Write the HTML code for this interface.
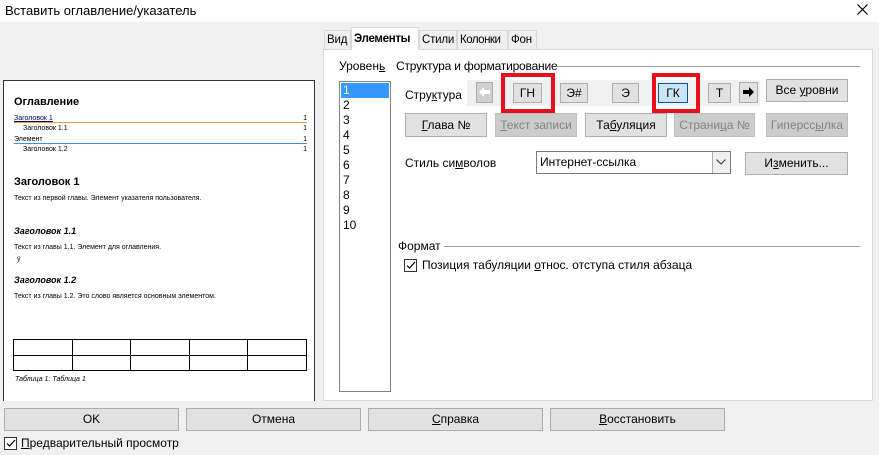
<!DOCTYPE html>
<html><head><meta charset="utf-8"><style>
body{margin:0;width:879px;height:455px;background:#f0f0f0;font-family:"Liberation Sans","DejaVu Sans",sans-serif;font-size:12px;color:#000;position:relative;overflow:hidden}
.a{position:absolute}
.btn{position:absolute;background:#e1e1e1;border:1px solid #adadad;box-sizing:border-box;text-align:center;font-size:12px}
.dis{background:#cccccc;border-color:#bfbfbf;color:#838383}
.pv{font-size:7px;position:absolute}
.tab{position:absolute;top:30px;height:19px;border:1px solid #d9d9d9;border-bottom:none;box-sizing:border-box;padding:3px 0 0 2px;font-size:11.5px;letter-spacing:-0.2px;white-space:nowrap}
</style></head><body>
<div class="a" style="left:0;top:0;width:879px;height:22px;background:#fff"></div>
<div class="a" style="left:5px;top:3px;font-size:13px">Вставить оглавление/указатель</div>
<svg class="a" style="left:857px;top:4px" width="11" height="11"><path d="M0.5 0.5L10.5 10.5M10.5 0.5L0.5 10.5" stroke="#000" stroke-width="1.2"/></svg>

<!-- preview -->
<div class="a" style="left:3px;top:80px;width:312px;height:321px;background:#fff;border:1px solid #333;box-sizing:border-box;border-bottom:none"></div>
<div class="a" style="left:14px;top:96px;font-size:11px;font-weight:bold">Оглавление</div>
<div class="pv" style="left:14px;top:115px;width:293px;border-bottom:1px solid #e0a040;color:#00006a;text-decoration:underline">Заголовок 1<span style="float:right;text-decoration:none;color:#000">1</span></div>
<div class="pv" style="left:23px;top:125px;width:284px">Заголовок 1.1<span style="float:right">1</span></div>
<div class="pv" style="left:14px;top:136px;width:293px;border-bottom:1px solid #4090e0">Элемент<span style="float:right">1</span></div>
<div class="pv" style="left:23px;top:146px;width:284px">Заголовок 1.2<span style="float:right">1</span></div>
<div class="a" style="left:14px;top:176px;font-size:11px;font-weight:bold">Заголовок 1</div>
<div class="pv" style="left:14px;top:195px">Текст из первой главы. Элемент указателя пользователя.</div>
<div class="a" style="left:14px;top:226px;font-size:9px;font-weight:bold;font-style:italic">Заголовок 1.1</div>
<div class="pv" style="left:14px;top:244px">Текст из главы 1.1. Элемент для оглавления.</div>
<div class="pv" style="left:17px;top:256px">ÿ</div>
<div class="a" style="left:14px;top:275px;font-size:9px;font-weight:bold;font-style:italic">Заголовок 1.2</div>
<div class="pv" style="left:14px;top:293px">Текст из главы 1.2. Это слово является основным элементом.</div>
<table class="a" style="left:13px;top:339px;width:294px;height:32px;border-collapse:collapse"><tr><td style="border:1px solid #000"></td><td style="border:1px solid #000"></td><td style="border:1px solid #000"></td><td style="border:1px solid #000"></td><td style="border:1px solid #000"></td></tr><tr><td style="border:1px solid #000"></td><td style="border:1px solid #000"></td><td style="border:1px solid #000"></td><td style="border:1px solid #000"></td><td style="border:1px solid #000"></td></tr></table>
<div class="pv" style="left:15px;top:376px;font-style:italic">Таблица 1: Таблица 1</div>

<!-- tabs -->
<div class="a" style="left:323px;top:49px;width:550px;height:352px;background:#fff;border:1px solid #d9d9d9;box-sizing:border-box"></div>
<div class="tab" style="left:324px;width:27px">Вид</div>
<div class="a" style="left:351px;top:27px;width:68px;height:23px;background:#fff;border:1px solid #d9d9d9;border-bottom:none;box-sizing:border-box;padding:5px 0 0 2px;font-weight:bold;font-size:11.5px;letter-spacing:-0.3px">Элементы</div>
<div class="tab" style="left:419px;width:38px">Стили</div>
<div class="tab" style="left:457px;width:51px;letter-spacing:-0.5px">Колонки</div>
<div class="tab" style="left:508px;width:29px">Фон</div>

<div class="a" style="left:339px;top:59px">Уровен<u>ь</u></div>
<div class="a" style="left:396px;top:59px;letter-spacing:-0.2px">Структура и форматирование</div>
<div class="a" style="left:556px;top:66px;width:304px;border-top:1px solid #a0a0a0"></div>
<div class="a" style="left:339px;top:81px;width:52px;height:311px;border:1px solid #828282;box-sizing:border-box"></div>
<div class="a" style="left:341px;top:83px;width:48px;height:15px;background:#3399ff"></div>
<div class="a" style="left:343px;top:83px;line-height:15px;font-size:12px"><span style="color:#fff">1</span><br>2<br>3<br>4<br>5<br>6<br>7<br>8<br>9<br>10</div>

<div class="a" style="left:405px;top:88px">Стру<u>к</u>тура</div>
<div class="a" style="left:467px;top:80px;width:293px;height:26px;background:#f0f0f0"></div>
<div class="btn" style="left:476px;top:82px;width:17px;height:21px;background:#d0d0d0"></div>
<svg class="a" style="left:478px;top:85px" width="13" height="14"><path d="M1 7L6 2V5H12V9H6V12Z" fill="#fff"/></svg>
<div class="btn" style="left:513px;top:83px;width:29px;height:20px;line-height:18px">ГН</div>
<div class="btn" style="left:560px;top:83px;width:28px;height:20px;line-height:18px">Э#</div>
<div class="btn" style="left:612px;top:83px;width:27px;height:20px;line-height:18px">Э</div>
<div class="btn" style="left:658px;top:83px;width:30px;height:20px;line-height:18px;background:#cce4f7;border-color:#005499">ГК</div>
<div class="btn" style="left:708px;top:83px;width:23px;height:20px;line-height:18px">Т</div>
<div class="btn" style="left:739px;top:82px;width:19px;height:21px"></div>
<svg class="a" style="left:742px;top:85px" width="13" height="14"><path d="M12 7L7 2V5H1V9H7V12Z" fill="#000"/></svg>
<div class="a" style="left:501px;top:73px;width:54px;height:40px;border:4px solid #e8101a;box-sizing:border-box"></div>
<div class="a" style="left:652px;top:73px;width:48px;height:40px;border:4px solid #e8101a;box-sizing:border-box"></div>
<div class="btn" style="left:766px;top:79px;width:82px;height:23px;line-height:21px">Все <u>у</u>ровни</div>

<div class="btn" style="left:405px;top:113px;width:82px;height:24px;line-height:22px"><u>Г</u>лава №</div>
<div class="btn dis" style="left:495px;top:113px;width:82px;height:24px;line-height:22px"><u>Т</u>екст записи</div>
<div class="btn" style="left:585px;top:113px;width:82px;height:24px;line-height:22px">Та<u>б</u>уляция</div>
<div class="btn dis" style="left:674px;top:113px;width:81px;height:24px;line-height:22px">Страни<u>ц</u>а №</div>
<div class="btn dis" style="left:766px;top:113px;width:82px;height:24px;line-height:22px">Гиперсс<u>ы</u>лка</div>

<div class="a" style="left:405px;top:156px">Стиль си<u>м</u>волов</div>
<div class="a" style="left:536px;top:151px;width:195px;height:23px;background:#fff;border:1px solid #7a7a7a;box-sizing:border-box;padding:3px 0 0 3px">Интернет-ссылка</div>
<div class="a" style="left:712px;top:152px;width:18px;height:21px;border-left:1px solid #adadad;box-sizing:border-box;background:#f0f0f0"></div>
<svg class="a" style="left:716px;top:159px" width="10" height="6"><path d="M0.5 0.5L5 5L9.5 0.5" stroke="#333" fill="none"/></svg>
<div class="btn" style="left:745px;top:152px;width:103px;height:23px;line-height:21px">И<u>з</u>менить...</div>

<div class="a" style="left:398px;top:239px">Формат</div>
<div class="a" style="left:444px;top:246px;width:416px;border-top:1px solid #a0a0a0"></div>
<div class="a" style="left:404px;top:259px;width:13px;height:13px;border:1px solid #333;box-sizing:border-box;background:#fff"></div>
<svg class="a" style="left:406px;top:261px" width="10" height="9"><path d="M1 4.5L3.5 7L9 1" stroke="#000" fill="none" stroke-width="1.2"/></svg>
<div class="a" style="left:422px;top:258px">Позиция табуляции <u>о</u>тнос. отступа стиля абзаца</div>

<div class="btn" style="left:4px;top:408px;width:175px;height:23px;line-height:21px">OK</div>
<div class="btn" style="left:186px;top:408px;width:175px;height:23px;line-height:21px">Отмена</div>
<div class="btn" style="left:368px;top:408px;width:175px;height:23px;line-height:21px"><u>С</u>правка</div>
<div class="btn" style="left:550px;top:408px;width:175px;height:23px;line-height:21px"><u>В</u>осстановить</div>
<div class="a" style="left:4px;top:437px;width:13px;height:13px;border:1px solid #333;box-sizing:border-box;background:#fff"></div>
<svg class="a" style="left:6px;top:439px" width="10" height="9"><path d="M1 4.5L3.5 7L9 1" stroke="#000" fill="none" stroke-width="1.2"/></svg>
<div class="a" style="left:21px;top:436px"><u>П</u>редварительный просмотр</div>
</body></html>
